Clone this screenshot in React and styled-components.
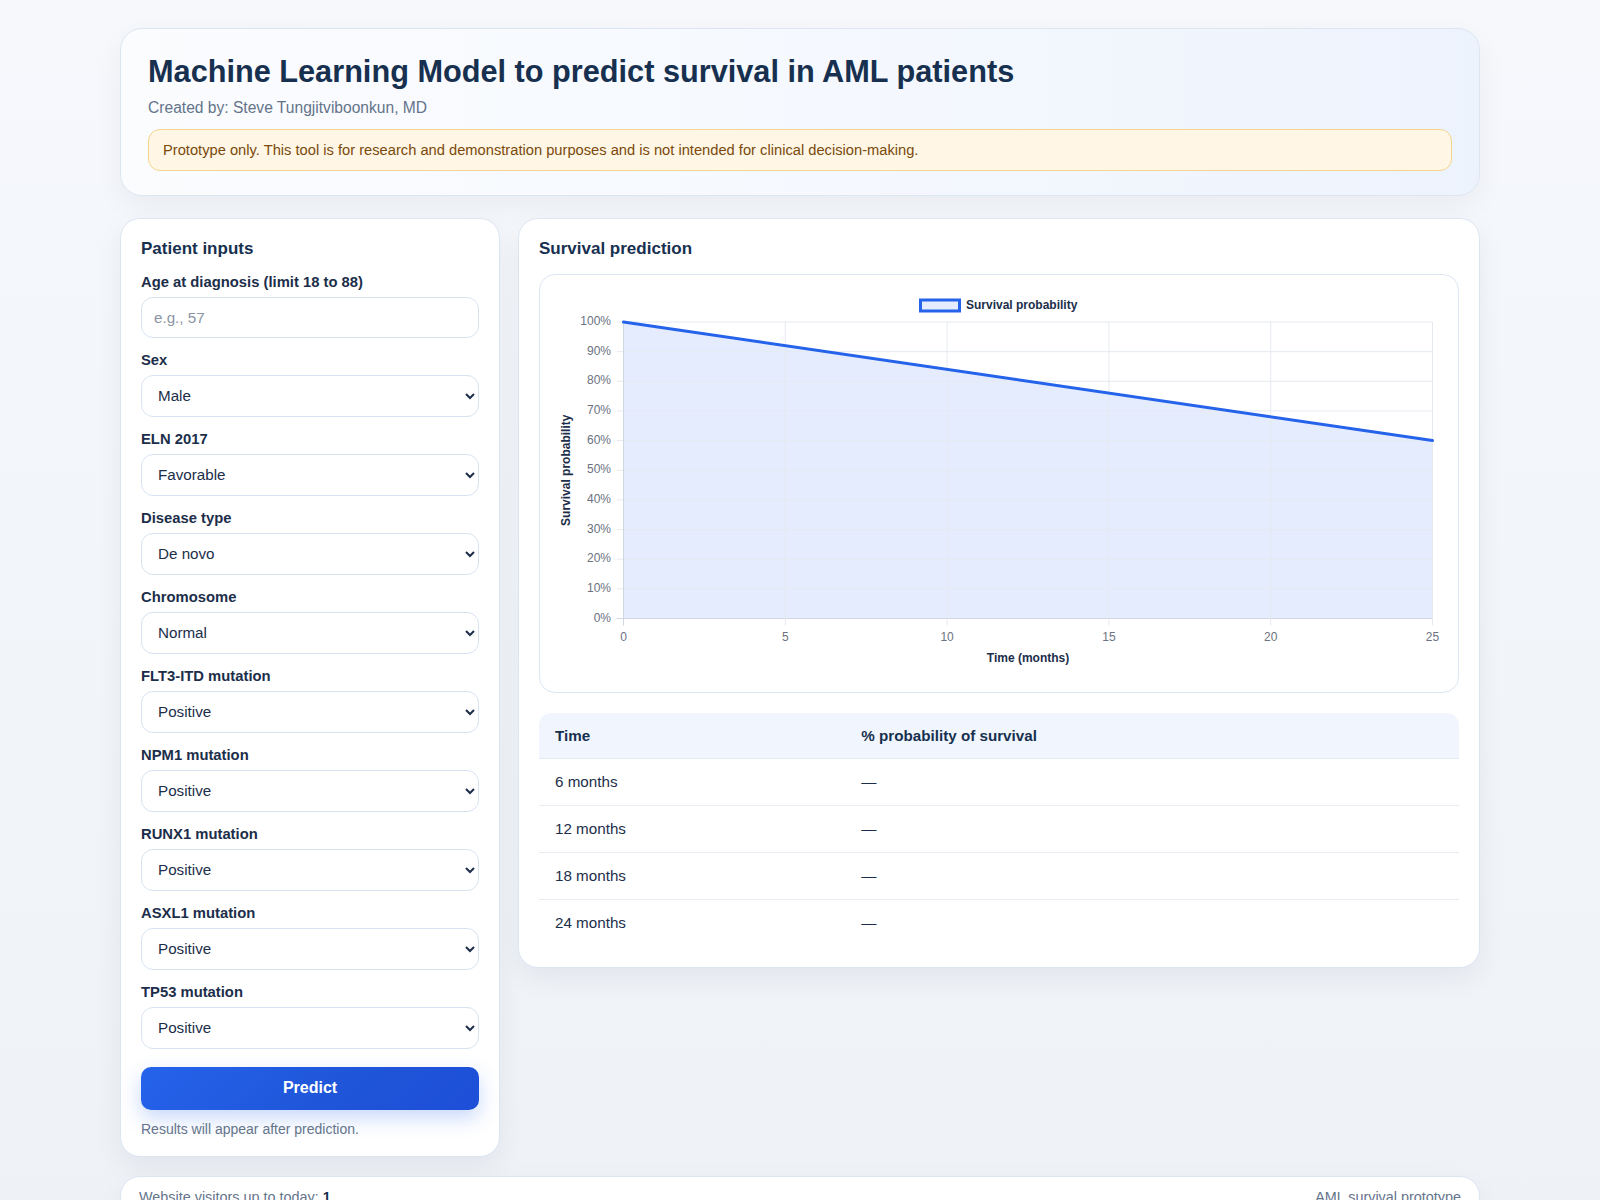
import React from "react";
import styled, { createGlobalStyle } from "styled-components";

const GlobalStyle = createGlobalStyle`
  html, body { margin: 0; padding: 0; }
  body {
    font-family: "Liberation Sans", Arial, sans-serif;
    background: linear-gradient(180deg, #f6f8fc 0%, #eef2f7 100%);
    min-height: 1200px;
    color: #1c2e4a;
  }
  * { box-sizing: border-box; }
`;

const Page = styled.div`
  width: 1360px;
  margin: 0 auto;
  padding-top: 28px;
  display: flex;
  flex-direction: column;
`;

const HeaderCard = styled.header`
  border: 1px solid #dce6f3;
  border-radius: 22px;
  background: linear-gradient(90deg, #fbfcfe 0%, #f4f8fe 60%, #edf3fd 100%);
  box-shadow: 0 10px 28px rgba(15, 23, 42, 0.05);
  padding: 25px 27px 24px;
  margin-bottom: 22px;
`;

const Title = styled.h1`
  margin: 0;
  font-size: 30.7px;
  line-height: 1.2;
  font-weight: 700;
  color: #17304f;
`;

const Subtitle = styled.p`
  margin: 6px 0 0;
  font-size: 15.6px;
  line-height: 21px;
  color: #64748b;
`;

const Warning = styled.div`
  margin-top: 11px;
  border: 1px solid #f5d48c;
  background: #fff6e5;
  border-radius: 12px;
  padding: 10px 14px;
  font-size: 14.7px;
  line-height: 20px;
  color: #7a4a0c;
`;

const Grid = styled.div`
  display: grid;
  grid-template-columns: 380px 1fr;
  gap: 18px;
  align-items: start;
`;

const Card = styled.section`
  background: #ffffff;
  border: 1px solid #dce6f3;
  border-radius: 20px;
  box-shadow: 0 10px 28px rgba(15, 23, 42, 0.06);
  padding: ${(p) => p.$pad || "20px"};
`;

const CardTitle = styled.h2`
  margin: 0;
  font-size: 17px;
  line-height: 20px;
  font-weight: 700;
  color: #17304f;
`;

const Form = styled.div`
  margin-top: 13px;
  display: flex;
  flex-direction: column;
  gap: 12px;
`;

const Field = styled.label`
  display: flex;
  flex-direction: column;
  gap: 5px;
`;

const Label = styled.span`
  font-size: 14.8px;
  line-height: 20px;
  font-weight: 700;
  color: #1c2e4a;
`;

const TextInput = styled.input`
  height: 41px;
  border: 1px solid #d7e3f2;
  border-radius: 12px;
  padding: 0 12px;
  font-family: "Liberation Sans", Arial, sans-serif;
  font-size: 15.2px;
  color: #1c2e4a;
  background: #fff;
  outline: none;
  &::placeholder { color: #8a94a3; }
`;

const Select = styled.select`
  height: 42px;
  border: 1px solid #d7e3f2;
  border-radius: 12px;
  padding: 0 8px 0 12px;
  font-family: "Liberation Sans", Arial, sans-serif;
  font-size: 15.2px;
  color: #1c2e4a;
  background: #fff;
  outline: none;
`;

const PredictButton = styled.button`
  margin-top: 18px;
  width: 100%;
  height: 43px;
  border: none;
  border-radius: 10px;
  background: linear-gradient(135deg, #2563eb 0%, #1f55d8 60%, #1d4ed8 100%);
  color: #fff;
  font-family: "Liberation Sans", Arial, sans-serif;
  font-size: 16px;
  font-weight: 700;
  box-shadow: 0 8px 20px rgba(37, 99, 235, 0.25);
  cursor: pointer;
`;

const Hint = styled.p`
  margin: 9px 0 0;
  font-size: 14px;
  line-height: 20px;
  color: #64748b;
`;

const ChartCard = styled.div`
  margin-top: 15px;
  border: 1px solid #dce6f3;
  border-radius: 16px;
  background: #fff;
  height: 419px;
  overflow: hidden;
`;

const ChartSvg = styled.svg`
  display: block;
  font-family: "Liberation Sans", Arial, sans-serif;
`;

const Table = styled.table`
  margin-top: 20px;
  width: 100%;
  border-collapse: separate;
  border-spacing: 0;
  table-layout: fixed;
`;

const Th = styled.th`
  text-align: left;
  background: #f1f6fe;
  height: 46px;
  padding: 0 16px;
  font-size: 15.2px;
  font-weight: 700;
  color: #17304f;
  border-bottom: 1px solid #e4ebf5;
  &:first-child { border-top-left-radius: 12px; width: 33.3%; }
  &:last-child { border-top-right-radius: 12px; }
`;

const Td = styled.td`
  height: 47px;
  padding: 0 16px;
  font-size: 15.2px;
  color: #1c2e4a;
  border-bottom: 1px solid ${(p) => (p.$last ? "transparent" : "#e8edf4")};
`;

const Footer = styled.footer`
  margin-top: 19px;
  background: #fff;
  border: 1px solid #dce6f3;
  border-radius: 20px;
  box-shadow: 0 10px 28px rgba(15, 23, 42, 0.05);
  padding: 10px 18px 20px;
  display: flex;
  justify-content: space-between;
  font-size: 14.4px;
  line-height: 20px;
  color: #64748b;
`;

const Count = styled.strong`
  color: #17304f;
`;

const selects = [
  ["Sex", "Male"],
  ["ELN 2017", "Favorable"],
  ["Disease type", "De novo"],
  ["Chromosome", "Normal"],
  ["FLT3-ITD mutation", "Positive"],
  ["NPM1 mutation", "Positive"],
  ["RUNX1 mutation", "Positive"],
  ["ASXL1 mutation", "Positive"],
  ["TP53 mutation", "Positive"],
];

const W = 916;
const H = 417;
const PL = 83.5;
const PR = 892.5;
const PT = 47;
const PB = 343.5;
const pw = PR - PL;
const ph = PB - PT;
const xAt = (m) => PL + (m / 25) * pw;
const yAt = (v) => PB - (v / 100) * ph;

function Chart() {
  const gridColor = "#e5eaf1";
  const lineD = `M ${xAt(0)} ${yAt(100)} L ${xAt(25)} ${yAt(60)}`;
  const areaD = `${lineD} L ${xAt(25)} ${PB} L ${xAt(0)} ${PB} Z`;
  return (
    <ChartSvg width={W} height={H} viewBox={`0 0 ${W} ${H}`}>
      <path d={areaD} fill="rgba(37,99,235,0.12)" />
      {Array.from({ length: 11 }, (_, i) => (
        <line
          key={`h${i}`}
          x1={PL - 7}
          x2={PR}
          y1={yAt(i * 10)}
          y2={yAt(i * 10)}
          stroke={i === 0 ? "#cfd7e2" : gridColor}
          strokeWidth="1"
        />
      ))}
      {Array.from({ length: 6 }, (_, i) => (
        <line
          key={`v${i}`}
          x1={xAt(i * 5)}
          x2={xAt(i * 5)}
          y1={PT}
          y2={PB + 7}
          stroke={i === 0 ? "#cfd7e2" : gridColor}
          strokeWidth="1"
        />
      ))}
      <path d={lineD} stroke="#2563eb" strokeWidth="3" fill="none" strokeLinecap="round" />
      {Array.from({ length: 11 }, (_, i) => (
        <text
          key={`yl${i}`}
          x={71}
          y={yAt(i * 10)}
          textAnchor="end"
          dominantBaseline="middle"
          fontSize="12"
          fill="#6b7280"
        >
          {i * 10}%
        </text>
      ))}
      {Array.from({ length: 6 }, (_, i) => (
        <text
          key={`xl${i}`}
          x={xAt(i * 5)}
          y={362.5}
          textAnchor="middle"
          dominantBaseline="middle"
          fontSize="12"
          fill="#6b7280"
        >
          {i * 5}
        </text>
      ))}
      <text
        x={488}
        y={383.5}
        textAnchor="middle"
        dominantBaseline="middle"
        fontSize="12"
        fontWeight="700"
        fill="#1c2e4a"
      >
        Time (months)
      </text>
      <text
        transform={`translate(27 ${(PT + PB) / 2}) rotate(-90)`}
        textAnchor="middle"
        dominantBaseline="middle"
        fontSize="12"
        fontWeight="700"
        fill="#1c2e4a"
      >
        Survival probability
      </text>
      <rect x={380.5} y={25} width={39} height={11} fill="rgba(37,99,235,0.12)" stroke="#2563eb" strokeWidth="3" />
      <text x={426} y={31} dominantBaseline="middle" fontSize="12" fontWeight="700" fill="#1c2e4a">
        Survival probability
      </text>
    </ChartSvg>
  );
}

export default function App() {
  const rows = ["6 months", "12 months", "18 months", "24 months"];
  return (
    <>
      <GlobalStyle />
      <Page>
        <HeaderCard>
          <Title>Machine Learning Model to predict survival in AML patients</Title>
          <Subtitle>Created by: Steve Tungjitviboonkun, MD</Subtitle>
          <Warning>
            Prototype only. This tool is for research and demonstration purposes and is not intended for clinical
            decision-making.
          </Warning>
        </HeaderCard>
        <Grid>
          <Card $pad="20px 20px 17px">
            <CardTitle>Patient inputs</CardTitle>
            <Form>
              <Field>
                <Label>Age at diagnosis (limit 18 to 88)</Label>
                <TextInput type="number" placeholder="e.g., 57" />
              </Field>
              {selects.map(([label, value]) => (
                <Field key={label}>
                  <Label>{label}</Label>
                  <Select defaultValue={value}>
                    <option>{value}</option>
                  </Select>
                </Field>
              ))}
            </Form>
            <PredictButton>Predict</PredictButton>
            <Hint>Results will appear after prediction.</Hint>
          </Card>
          <Card>
            <CardTitle>Survival prediction</CardTitle>
            <ChartCard>
              <Chart />
            </ChartCard>
            <Table>
              <thead>
                <tr>
                  <Th>Time</Th>
                  <Th>% probability of survival</Th>
                </tr>
              </thead>
              <tbody>
                {rows.map((r, i) => (
                  <tr key={r}>
                    <Td $last={i === rows.length - 1}>{r}</Td>
                    <Td $last={i === rows.length - 1}>—</Td>
                  </tr>
                ))}
              </tbody>
            </Table>
          </Card>
        </Grid>
        <Footer>
          <span>
            Website visitors up to today: <Count>1</Count>
          </span>
          <span>AML survival prototype</span>
        </Footer>
      </Page>
    </>
  );
}
